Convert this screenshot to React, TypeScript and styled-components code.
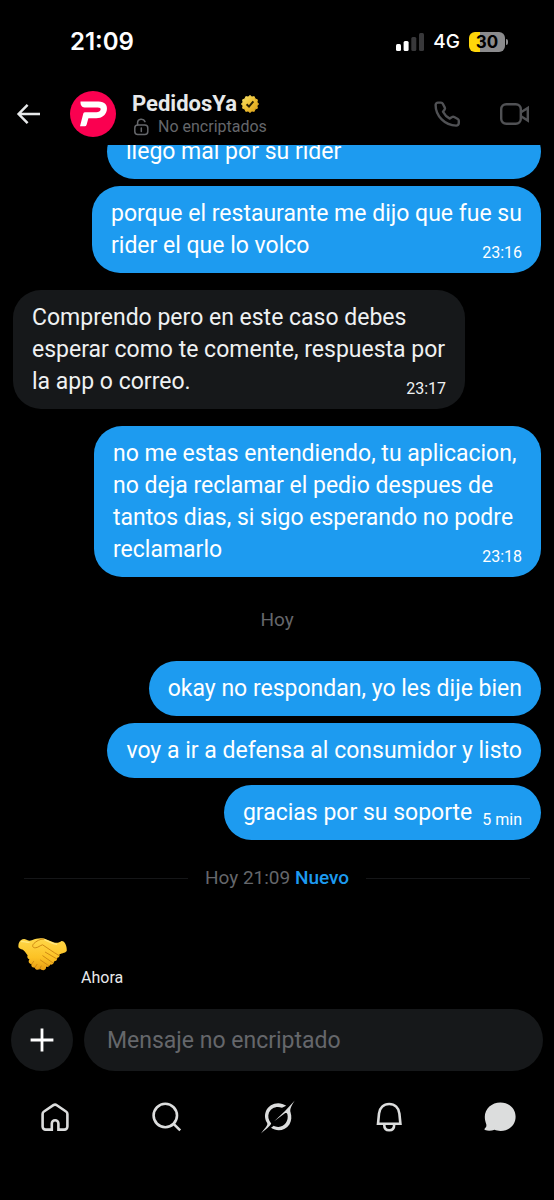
import React from 'react';
import styled, { createGlobalStyle } from 'styled-components';

const GlobalStyle = createGlobalStyle`
  * { box-sizing: border-box; }
  body { margin: 0; background: #000; }
  button, input { font: inherit; color: inherit; border: 0; padding: 0; margin: 0; background: none; outline: none; }
  svg { display: block; flex: none; }
`;

const Screen = styled.div`
  display: flex;
  flex-direction: column;
  height: 100vh;
  background: #000;
  color: #e7e9ea;
  font-family: Roboto, 'Liberation Sans', sans-serif;
`;

const StatusBar = styled.div`
  display: flex;
  align-items: center;
  justify-content: space-between;
  height: 83px;
  padding: 0 46px 0 70px;
  color: #fff;
`;

const Clock = styled.time`
  font: 600 24px/28px Inter, sans-serif;
`;

const StatusIcons = styled.div`
  display: flex;
  align-items: center;
  gap: 9px;
  font: 500 19px/24px Inter, sans-serif;
`;

const Battery = styled.div`
  display: flex;
  align-items: center;
  gap: 1px;
  &::after {
    content: '';
    width: 2px;
    height: 6px;
    border-radius: 0 2px 2px 0;
    background: #8b8b8d;
  }
`;

const BatteryLevel = styled.span`
  width: 36px;
  height: 20px;
  border-radius: 6px;
  background: linear-gradient(90deg, #ffd60a 30%, #8b8b8d 30%);
  color: #000;
  text-align: center;
  font-size: 17px;
  line-height: 20px;
  font-weight: 700;
`;

const Header = styled.header`
  display: flex;
  align-items: center;
  height: 62px;
  padding: 0 24px 0 14px;
`;

const IconButton = styled.button<{ $muted?: boolean }>`
  display: flex;
  align-items: center;
  justify-content: center;
  width: 32px;
  height: 32px;
  && { color: ${(p) => (p.$muted ? '#505154' : '#e7e9ea')}; }
`;

const Avatar = styled.svg`
  margin: 0 16px 0 24px;
`;

const Contact = styled.div`
  flex: 1;
  min-width: 0;
`;

const Name = styled.h1`
  display: flex;
  align-items: center;
  gap: 4px;
  margin: 0;
  font-size: 22px;
  line-height: 26px;
  font-weight: 700;
`;

const Encryption = styled.p`
  display: flex;
  align-items: center;
  gap: 8px;
  margin: 0;
  font-size: 16px;
  line-height: 20px;
  color: #65676b;
`;

const Calls = styled.div`
  display: flex;
  gap: 35px;
`;

const Chat = styled.main`
  flex: 1;
  min-height: 0;
  display: flex;
  flex-direction: column;
  justify-content: flex-end;
  overflow: hidden;
  padding: 0 13px 22px;
`;

const Group = styled.div<{ $incoming?: boolean }>`
  flex: none;
  display: flex;
  flex-direction: column;
  align-items: ${(p) => (p.$incoming ? 'flex-start' : 'flex-end')};
  gap: 7px;
  margin-bottom: 17px;
`;

const Bubble = styled.div<{ $incoming?: boolean; $width?: number }>`
  width: ${(p) => (p.$width ? `${p.$width}px` : 'auto')};
  max-width: 100%;
  padding: 12px 19px 11px;
  border-radius: 28px;
  background: ${(p) => (p.$incoming ? '#16181a' : '#1d9bf0')};
  color: ${(p) => (p.$incoming ? '#eff1f2' : '#fff')};
`;

const Line = styled.div`
  display: flex;
  align-items: flex-end;
  justify-content: space-between;
  gap: 10px;
`;

const Text = styled.span`
  font-size: 23px;
  line-height: 32px;
  white-space: nowrap;
`;

const Stamp = styled.time`
  font-size: 16px;
  line-height: 18px;
  white-space: nowrap;
`;

const Day = styled.div`
  flex: none;
  margin: 14px 0 29px;
  text-align: center;
  font-size: 19px;
  line-height: 24px;
  color: #65676b;
`;

const Unread = styled.div`
  flex: none;
  display: flex;
  align-items: center;
  gap: 17px;
  margin: 9px 11px 45px;
  font-size: 19px;
  line-height: 24px;
  color: #65676b;
  &::before, &::after { content: ''; flex: 1; height: 1px; background: #151618; }
  strong { color: #1d9bf0; font-weight: 500; }
`;

const Reaction = styled.div`
  flex: none;
  display: flex;
  align-items: flex-end;
  gap: 13px;
  padding-left: 5px;
`;

const Composer = styled.form`
  display: flex;
  gap: 11px;
  padding: 0 11px;
`;

const AddButton = styled.button`
  && { background: #16181a; color: #fff; }
  display: flex;
  align-items: center;
  justify-content: center;
  flex: none;
  width: 62px;
  height: 62px;
  border-radius: 50%;
`;

const MessageInput = styled.input`
  && { padding: 0 23px; background: #16181a; font-size: 23px; }
  flex: 1;
  min-width: 0;
  height: 62px;
  border-radius: 31px;
  &::placeholder { color: #65676b; opacity: 1; }
`;

const TabBar = styled.nav`
  display: flex;
  justify-content: space-around;
  padding: 28px 0 65px;
`;

const Tab = styled.a`
  display: block;
  color: #dcdddd;
`;

type Message = { text: string[]; time?: string; width?: number; incoming?: boolean };

const earlier: Message[][] = [
  [
    { text: ['llego mal por su rider'], width: 434 },
    { text: ['porque el restaurante me dijo que fue su', 'rider el que lo volco'], time: '23:16', width: 449 },
  ],
  [
    {
      text: ['Comprendo pero en este caso debes', 'esperar como te comente, respuesta por', 'la app o correo.'],
      time: '23:17',
      width: 452,
      incoming: true,
    },
  ],
  [
    {
      text: [
        'no me estas entendiendo, tu aplicacion,',
        'no deja reclamar el pedio despues de',
        'tantos dias, si sigo esperando no podre',
        'reclamarlo',
      ],
      time: '23:18',
      width: 447,
    },
  ],
];

const today: Message[] = [
  { text: ['okay no respondan, yo les dije bien'] },
  { text: ['voy a ir a defensa al consumidor y listo'] },
  { text: ['gracias por su soporte'], time: '5 min' },
];

function MessageGroup({ items }: { items: Message[] }) {
  return (
    <Group $incoming={items[0].incoming}>
      {items.map((m) => (
        <Bubble key={m.text[0]} $incoming={m.incoming} $width={m.width}>
          {m.text.map((line, i) => (
            <Line key={line}>
              <Text>{line}</Text>
              {m.time && i === m.text.length - 1 && <Stamp>{m.time}</Stamp>}
            </Line>
          ))}
        </Bubble>
      ))}
    </Group>
  );
}

function Signal() {
  return (
    <svg width="28" height="18" viewBox="0 0 28 18" aria-hidden="true">
      <rect x="0" y="11" width="5" height="7" rx="1.5" fill="#fff" />
      <rect x="7.6" y="8" width="5" height="10" rx="1.5" fill="#fff" />
      <rect x="15.3" y="4" width="5" height="14" rx="1.5" fill="#38383a" />
      <rect x="23" y="0" width="5" height="18" rx="1.5" fill="#38383a" />
    </svg>
  );
}

function Logo() {
  return (
    <Avatar width="46" height="46" viewBox="0 0 46 46" role="img" aria-label="PedidosYa">
      <circle cx="23" cy="23" r="23" fill="#fa0050" />
      <path
        fill="#fff"
        d="M10.5 10.5H28.5C34.8 10.5 37.8 14.4 36.8 19.2S31.8 27.2 26.3 27.2H18.4L16.6 33.8Q16.2 35.3 14.8 35.3H10L13.3 22.6Q13.7 21.2 15.2 21.2H26.4C28.8 21.2 30.2 20.2 30.6 18.7S29.8 16.4 27.8 16.4H14.6C11.4 16.4 10.3 13.6 10.5 10.5Z"
      />
    </Avatar>
  );
}

const badgePoints = Array.from({ length: 24 }, (_, i) => {
  const radius = i % 2 ? 7.2 : 8.5;
  const angle = (i * Math.PI) / 12;
  return `${(9 + radius * Math.sin(angle)).toFixed(2)},${(9 - radius * Math.cos(angle)).toFixed(2)}`;
}).join(' ');

function Badge() {
  return (
    <svg width="18" height="18" viewBox="0 0 18 18" role="img" aria-label="Cuenta verificada">
      <defs>
        <linearGradient id="gold" x1="0" y1="0" x2="1" y2="1">
          <stop offset="0" stopColor="#f8e46c" />
          <stop offset=".5" stopColor="#eec033" />
          <stop offset="1" stopColor="#d89c18" />
        </linearGradient>
      </defs>
      <polygon points={badgePoints} fill="url(#gold)" stroke="url(#gold)" strokeWidth="1" strokeLinejoin="round" />
      <path d="M5.6 9.3L8 11.6L12.4 6.4" fill="none" stroke="#2b2003" strokeWidth="2" />
    </svg>
  );
}

function Lock() {
  return (
    <svg width="18" height="18" viewBox="0 0 18 18" fill="none" stroke="currentColor" strokeWidth="1.5" aria-hidden="true">
      <rect x="2.8" y="7" width="13" height="9.5" rx="3" />
      <path d="M5.6 7V4.6C5.6 .6 11.6 .2 13 3.6M9.3 10V13.4" strokeLinecap="round" />
    </svg>
  );
}

function Handshake() {
  return (
    <svg width="50" height="52" viewBox="0 0 50 52" role="img" aria-label="Apretón de manos">
      <defs>
        <linearGradient id="skin" x1="0" y1="0" x2="0" y2="1">
          <stop offset="0" stopColor="#ffd84a" />
          <stop offset=".6" stopColor="#fcc225" />
          <stop offset="1" stopColor="#e99d12" />
        </linearGradient>
      </defs>
      <path
        fill="url(#skin)"
        d="M.4 12C.2 9 1 6.4 2.8 5.2C4.5 4 6.8 3.6 8 4.6C10 6.2 12.5 5.8 14.5 5C18 3.4 22 2.6 26 3.6L36 7.4C39 8.4 41.5 7.6 43.5 6C46.5 5.6 49 10.6 48.8 15.5C48.6 17.6 44 18.4 41.5 19.2C41.8 21.2 41 22.6 39.3 22.8C39.4 25 38 26.4 36 26.4C36 28.6 34.2 30 32.2 29.6C31.6 31.6 30 32.2 28 31.8C28.4 33.6 27.2 35.4 25.2 35.2C23.8 35.2 22.6 34.6 21.8 33.8C20 35.6 17 34.6 16.8 32.4C14.6 33.2 12.6 31.2 13.6 29C11 28.8 9.8 26.6 11.4 24.2C9.6 23.8 8.8 22 9.6 20.2C7.6 18 6.4 15.6 4.4 14.6C2.6 14 .8 13.4 .4 12Z"
      />
      <path
        d="M25.8 4C21.5 4 18.4 6.2 15.8 8.6C13.8 10.6 14.6 13 17.2 12.8C20 12.8 22 10.4 24.6 9.8C28.8 12.6 35 17 40.8 20.4M27.4 17.2L38.6 23.8M24.8 20.8L34.8 27.8M22.4 25L30.6 30.6M13.6 29.2L15.6 26.4M17 32.4L19 29.4M21.8 34L23.2 31"
        fill="none"
        stroke="#d08a14"
        strokeWidth="1"
        strokeLinecap="round"
      />
      <path d="M27 4.8C31 6.4 34.6 8.6 38.6 9.4M3.6 6.6C6 6 8 7.6 11 7.4" fill="none" stroke="#ffe67c" strokeWidth="1.4" strokeLinecap="round" />
    </svg>
  );
}

const tabs = [
  {
    label: 'Inicio',
    href: '#inicio',
    icon: (
      <path d="M14.8 30.6H8.6A3 3 0 0 1 5.6 27.6V15A3 3 0 0 1 7 12.5L16.4 6.2A3 3 0 0 1 19.8 6.2L29 12.5A3 3 0 0 1 30.4 15V27.6A3 3 0 0 1 27.4 30.6H21.4V24.6A3.3 3.3 0 0 0 14.8 24.6Z" />
    ),
  },
  { label: 'Buscar', href: '#buscar', icon: <path d="M29 16.5A11.7 11.7 0 1 1 5.6 16.5A11.7 11.7 0 1 1 29 16.5ZM25.6 24.8L32.2 31.4" /> },
  {
    label: 'Grok',
    href: '#grok',
    icon: (
      <g fill="currentColor" stroke="none">
        <path d="M27.2 6.8C20 1.6 10.2 4.6 7 12C5.2 16.4 6 20.6 8 23.8C9 25.6 8 27 2 34.4C7.4 29.6 11.2 27 12.2 24.4C9.2 21 8.6 17 10 13.6C12.2 8.6 18 6.6 23 8.8Z" />
        <path d="M15.2 22.2L25.6 14.5C26.8 13.6 28 14 28.4 15.2C30 21.6 25.6 27.6 19.6 27.9C17.4 28 15.8 27.4 14.8 26.8L12 28.7C18 33 26.4 31.6 30.4 25.4C32.6 22 32.8 17.6 31.6 13.6C30.8 10.4 31.4 8 35.8 1.4L26 12Z" />
      </g>
    ),
  },
  {
    label: 'Notificaciones',
    href: '#notificaciones',
    icon: <path d="M8 24.8L9 14.6C9.5 8.8 13.6 5 19.2 5S28.9 8.8 29.4 14.6L30.4 24.8ZM14.2 25.4C14.2 28.8 16 31.2 19.2 31.2S24.2 28.8 24.2 25.4" />,
  },
  {
    label: 'Mensajes',
    href: '#mensajes',
    icon: (
      <path
        fill="currentColor"
        stroke="none"
        d="M19.4 3.4C28 3.4 34.6 9.6 34.6 17.8S28 32 19.6 32C17.2 32 15.2 31.4 13.6 30.8C10.6 31.8 6.8 32 4 31C3.2 30.6 3.4 29.8 4 29.2C5.4 28 5.6 26.8 5.2 25C4.4 22.8 3.8 20.6 3.8 17.8C3.8 9.6 10.8 3.4 19.4 3.4Z"
      />
    ),
  },
];

export default function App() {
  return (
    <Screen>
      <GlobalStyle />
      <StatusBar>
        <Clock>21:09</Clock>
        <StatusIcons>
          <Signal />
          <span>4G</span>
          <Battery>
            <BatteryLevel>30</BatteryLevel>
          </Battery>
        </StatusIcons>
      </StatusBar>
      <Header>
        <IconButton type="button" aria-label="Volver">
          <svg width="32" height="32" viewBox="0 0 32 32" fill="none" stroke="currentColor" strokeWidth="2.5">
            <path d="M26 16H5M13.6 6.8L4.6 16L13.6 25.2" />
          </svg>
        </IconButton>
        <Logo />
        <Contact>
          <Name>
            PedidosYa
            <Badge />
          </Name>
          <Encryption>
            <Lock />
            No encriptados
          </Encryption>
        </Contact>
        <Calls>
          <IconButton type="button" $muted aria-label="Llamar">
            <svg width="32" height="32" viewBox="0 0 32 32" fill="none" stroke="currentColor" strokeWidth="2.4" strokeLinejoin="round">
              <path d="M7 4.6H10A2 2 0 0 1 11.8 5.7L13.8 9.6A2 2 0 0 1 13.5 11.8L12 13.8C13.6 17 16 19.2 18.8 20.6L21.1 19.1A2 2 0 0 1 23.2 19L26.8 21A2 2 0 0 1 27.8 22.8V25A2.6 2.6 0 0 1 25.2 27.6C14 27.6 4.6 18 4.6 7A2.4 2.4 0 0 1 7 4.6Z" />
            </svg>
          </IconButton>
          <IconButton type="button" $muted aria-label="Videollamada">
            <svg width="32" height="32" viewBox="0 0 32 32" fill="none" stroke="currentColor" strokeWidth="2.4">
              <rect x="3.2" y="6.2" width="19.6" height="19.6" rx="5" />
              <path d="M23 14.2L29.8 10V22.6L23 18.2" />
            </svg>
          </IconButton>
        </Calls>
      </Header>
      <Chat>
        {earlier.map((items) => (
          <MessageGroup key={items[0].text[0]} items={items} />
        ))}
        <Day>Hoy</Day>
        <MessageGroup items={today} />
        <Unread>
          <span>
            Hoy 21:09 <strong>Nuevo</strong>
          </span>
        </Unread>
        <Reaction>
          <Handshake />
          <Stamp>Ahora</Stamp>
        </Reaction>
      </Chat>
      <Composer>
        <AddButton type="button" aria-label="Adjuntar">
          <svg width="24" height="24" viewBox="0 0 24 24" stroke="currentColor" strokeWidth="2.8">
            <path d="M12 .6V23.4M.6 12H23.4" />
          </svg>
        </AddButton>
        <MessageInput type="text" aria-label="Mensaje" placeholder="Mensaje no encriptado" />
      </Composer>
      <TabBar>
        {tabs.map((tab) => (
          <Tab key={tab.label} href={tab.href} aria-label={tab.label}>
            <svg width="36" height="36" viewBox="0 0 36 36" fill="none" stroke="currentColor" strokeWidth="2.6">
              {tab.icon}
            </svg>
          </Tab>
        ))}
      </TabBar>
    </Screen>
  );
}
